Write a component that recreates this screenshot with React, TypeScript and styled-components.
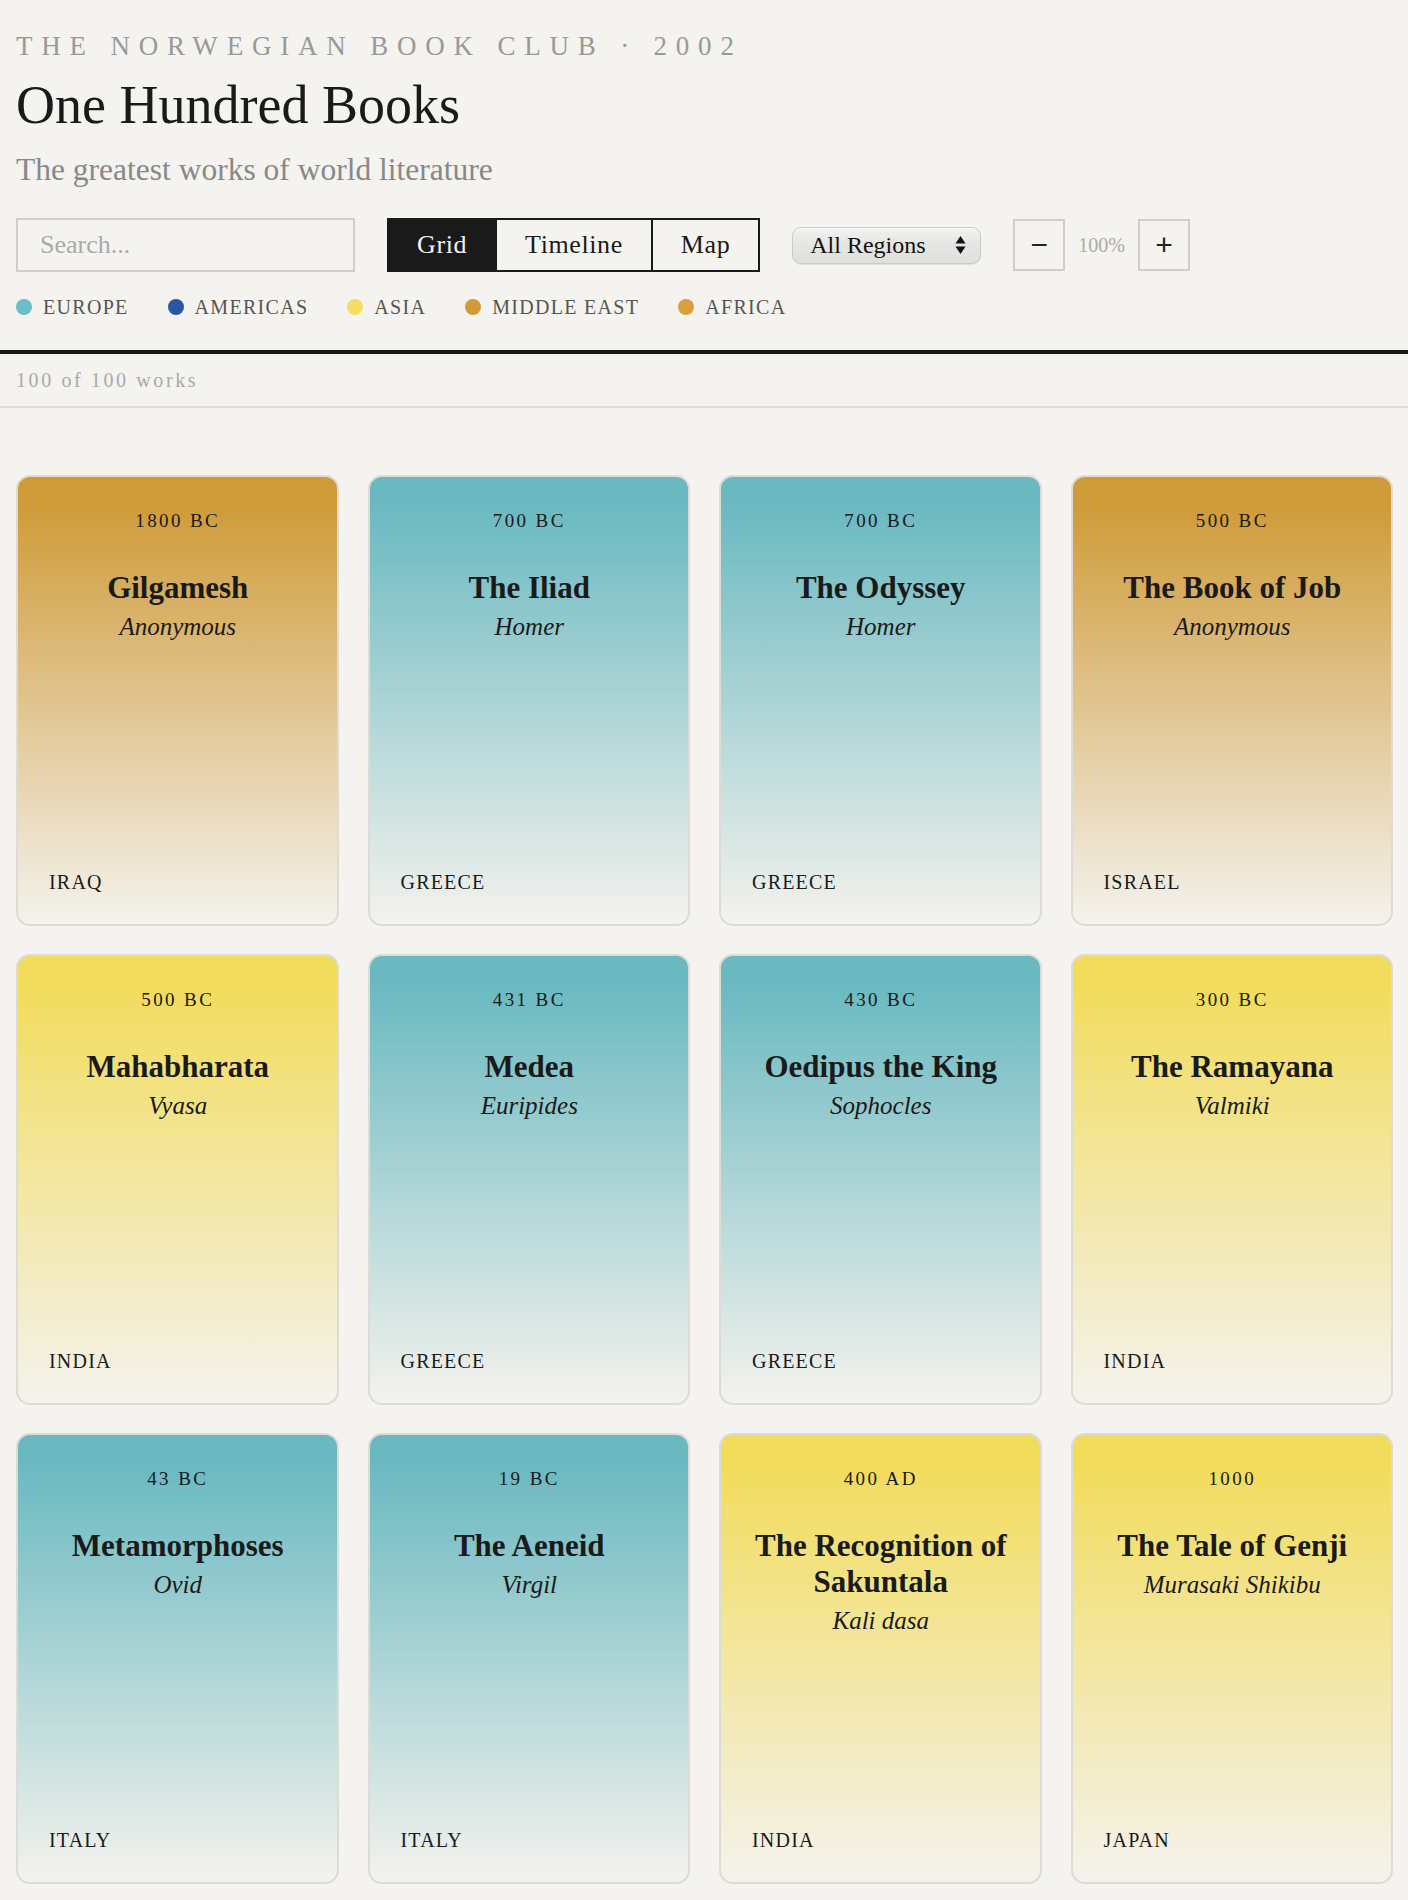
import styled, { createGlobalStyle } from 'styled-components';

type Region = 'europe' | 'americas' | 'asia' | 'middleEast' | 'africa';

const DOT_COLORS: Record<Region, string> = {
  europe: '#6cbec6',
  americas: '#2b55a5',
  asia: '#f4df63',
  middleEast: '#d29b37',
  africa: '#da9e3a',
};

const CARD_COLORS: Record<Region, string> = {
  europe: '#6ab9c1',
  americas: '#4d74b8',
  asia: '#f2dc5c',
  middleEast: '#cf9b39',
  africa: '#d69d3b',
};

const LEGEND: { region: Region; label: string }[] = [
  { region: 'europe', label: 'Europe' },
  { region: 'americas', label: 'Americas' },
  { region: 'asia', label: 'Asia' },
  { region: 'middleEast', label: 'Middle East' },
  { region: 'africa', label: 'Africa' },
];

type Book = { title: string; author: string; date: string; country: string; region: Region };

const BOOKS: Book[] = [
  { title: 'Gilgamesh', author: 'Anonymous', date: '1800 BC', country: 'Iraq', region: 'middleEast' },
  { title: 'The Iliad', author: 'Homer', date: '700 BC', country: 'Greece', region: 'europe' },
  { title: 'The Odyssey', author: 'Homer', date: '700 BC', country: 'Greece', region: 'europe' },
  { title: 'The Book of Job', author: 'Anonymous', date: '500 BC', country: 'Israel', region: 'middleEast' },
  { title: 'Mahabharata', author: 'Vyasa', date: '500 BC', country: 'India', region: 'asia' },
  { title: 'Medea', author: 'Euripides', date: '431 BC', country: 'Greece', region: 'europe' },
  { title: 'Oedipus the King', author: 'Sophocles', date: '430 BC', country: 'Greece', region: 'europe' },
  { title: 'The Ramayana', author: 'Valmiki', date: '300 BC', country: 'India', region: 'asia' },
  { title: 'Metamorphoses', author: 'Ovid', date: '43 BC', country: 'Italy', region: 'europe' },
  { title: 'The Aeneid', author: 'Virgil', date: '19 BC', country: 'Italy', region: 'europe' },
  { title: 'The Recognition of Sakuntala', author: 'Kali dasa', date: '400 AD', country: 'India', region: 'asia' },
  { title: 'The Tale of Genji', author: 'Murasaki Shikibu', date: '1000', country: 'Japan', region: 'asia' },
  { title: 'One Thousand and One Nights', author: 'Anonymous', date: '1200', country: 'Iran', region: 'middleEast' },
  { title: "Njál's Saga", author: 'Anonymous', date: '1300', country: 'Iceland', region: 'europe' },
  { title: 'The Divine Comedy', author: 'Dante Alighieri', date: '1320', country: 'Italy', region: 'europe' },
  { title: 'The Decameron', author: 'Giovanni Boccaccio', date: '1351', country: 'Italy', region: 'europe' },
];

const GlobalStyles = createGlobalStyle`
  body {
    margin: 0;
    background-color: #f4f3ef;
    font-family: 'Liberation Serif', serif;
    color: #1a1a1a;
  }
`;

const Header = styled.header`
  padding: 30px 16px 31px;
  border-bottom: 4px solid #1a1a1a;
`;

const Kicker = styled.div`
  font-size: 27px;
  line-height: 32px;
  letter-spacing: 8.8px;
  text-transform: uppercase;
  color: #999;
`;

const Title = styled.h1`
  margin: 13px 0 0;
  font-size: 54px;
  line-height: 60px;
  font-weight: 400;
  color: #1a1a1a;
`;

const Subtitle = styled.p`
  margin: 17px 0 0;
  font-size: 31.5px;
  line-height: 36px;
  color: #888;
`;

const Controls = styled.div`
  display: flex;
  align-items: center;
  gap: 32px;
  margin-top: 30px;
`;

const SearchInput = styled.input`
  box-sizing: border-box;
  width: 339px;
  height: 54px;
  padding: 0 22px;
  border: 2px solid #cfcecb;
  background: transparent;
  font-family: 'Liberation Serif', serif;
  font-size: 26px;
  color: #1a1a1a;
  outline: none;

  &::placeholder {
    color: #aaa;
  }
`;

const Toggle = styled.div`
  display: flex;
  border: 2px solid #1a1a1a;
`;

const ToggleButton = styled.button<{ $active?: boolean }>`
  height: 50px;
  padding: 0 28px;
  border: none;
  border-left: 2px solid #1a1a1a;
  background: ${(p) => (p.$active ? '#1a1a1a' : 'transparent')};
  color: ${(p) => (p.$active ? '#f4f3ef' : '#1a1a1a')};
  font-family: 'Liberation Serif', serif;
  font-size: 26px;
  letter-spacing: 0.6px;
  cursor: pointer;

  &:first-child {
    border-left: none;
  }
`;

const RegionSelect = styled.button`
  box-sizing: border-box;
  display: flex;
  align-items: center;
  justify-content: space-between;
  width: 189px;
  height: 37px;
  padding: 0 14px 0 17px;
  border: 1px solid #c9c9c7;
  border-radius: 9px;
  background: linear-gradient(180deg, #f1f1f0 0%, #e6e6e4 45%, #dfdfdd 100%);
  box-shadow: inset 0 1px 0 #fff, 0 1px 1px rgba(0, 0, 0, 0.08);
  font-family: 'Liberation Serif', serif;
  font-size: 24px;
  color: #111;
`;

const ZoomGroup = styled.div`
  display: flex;
  align-items: center;
  gap: 13px;
`;

const ZoomButton = styled.button`
  box-sizing: border-box;
  width: 52px;
  height: 52px;
  border: 2px solid #cfcecb;
  background: transparent;
  font-family: 'Liberation Sans', sans-serif;
  font-size: 30px;
  line-height: 1;
  color: #222;
  padding: 0;
`;

const ZoomLevel = styled.span`
  font-size: 20px;
  color: #aaa;
`;

const Legend = styled.ul`
  display: flex;
  gap: 39px;
  margin: 23px 0 0;
  padding: 0;
  list-style: none;
`;

const LegendItem = styled.li`
  display: flex;
  align-items: center;
  gap: 11px;
  font-size: 20px;
  line-height: 24px;
  letter-spacing: 1.3px;
  text-transform: uppercase;
  color: #555;
`;

const Dot = styled.span<{ $color: string }>`
  width: 16px;
  height: 16px;
  border-radius: 50%;
  background: ${(p) => p.$color};
`;

const CountBar = styled.div`
  padding: 14px 16px;
  border-bottom: 2px solid #dedcd7;
  font-size: 20px;
  line-height: 24px;
  letter-spacing: 2.6px;
  color: #aaa;
`;

const Grid = styled.main`
  display: grid;
  grid-template-columns: repeat(4, 1fr);
  gap: 28px 29px;
  padding: 67px 15px 40px 16px;
`;

const Card = styled.article<{ $color: string }>`
  box-sizing: border-box;
  height: 451px;
  display: flex;
  flex-direction: column;
  align-items: center;
  padding: 30px 30px 30px 31px;
  border: 2px solid #dddbd6;
  border-radius: 14px;
  background: linear-gradient(180deg, ${(p) => p.$color} 0%, ${(p) => p.$color} 6%, #f4f2ed 100%);
  text-align: center;
  color: #1a1a1a;
`;

const CardDate = styled.div`
  font-size: 19px;
  line-height: 27px;
  letter-spacing: 2.4px;
`;

const CardTitle = styled.h2`
  margin: 36px 0 0;
  font-size: 31px;
  line-height: 36px;
  font-weight: 700;
`;

const CardAuthor = styled.div`
  margin-top: 4px;
  font-size: 25px;
  line-height: 33px;
  font-style: italic;
`;

const CardCountry = styled.div`
  margin-top: auto;
  align-self: flex-start;
  font-size: 20px;
  line-height: 24px;
  letter-spacing: 1.2px;
  text-transform: uppercase;
`;

const SelectArrows = () => (
  <svg width="11" height="20" viewBox="0 0 11 20">
    <path d="M5.5 1 L10.5 8.5 L0.5 8.5 Z" fill="#111" />
    <path d="M5.5 19 L10.5 11.5 L0.5 11.5 Z" fill="#111" />
  </svg>
);

const App = () => {
  return (
    <>
      <GlobalStyles />
      <Header>
        <Kicker>The Norwegian Book Club · 2002</Kicker>
        <Title>One Hundred Books</Title>
        <Subtitle>The greatest works of world literature</Subtitle>
        <Controls>
          <SearchInput type="text" placeholder="Search..." />
          <Toggle>
            <ToggleButton $active>Grid</ToggleButton>
            <ToggleButton>Timeline</ToggleButton>
            <ToggleButton>Map</ToggleButton>
          </Toggle>
          <RegionSelect>
            All Regions
            <SelectArrows />
          </RegionSelect>
          <ZoomGroup>
            <ZoomButton>−</ZoomButton>
            <ZoomLevel>100%</ZoomLevel>
            <ZoomButton>+</ZoomButton>
          </ZoomGroup>
        </Controls>
        <Legend>
          {LEGEND.map((l) => (
            <LegendItem key={l.region}>
              <Dot $color={DOT_COLORS[l.region]} />
              {l.label}
            </LegendItem>
          ))}
        </Legend>
      </Header>
      <CountBar>100 of 100 works</CountBar>
      <Grid>
        {BOOKS.map((b) => (
          <Card key={b.title} $color={CARD_COLORS[b.region]}>
            <CardDate>{b.date}</CardDate>
            <CardTitle>{b.title}</CardTitle>
            <CardAuthor>{b.author}</CardAuthor>
            <CardCountry>{b.country}</CardCountry>
          </Card>
        ))}
      </Grid>
    </>
  );
};

export default App;
